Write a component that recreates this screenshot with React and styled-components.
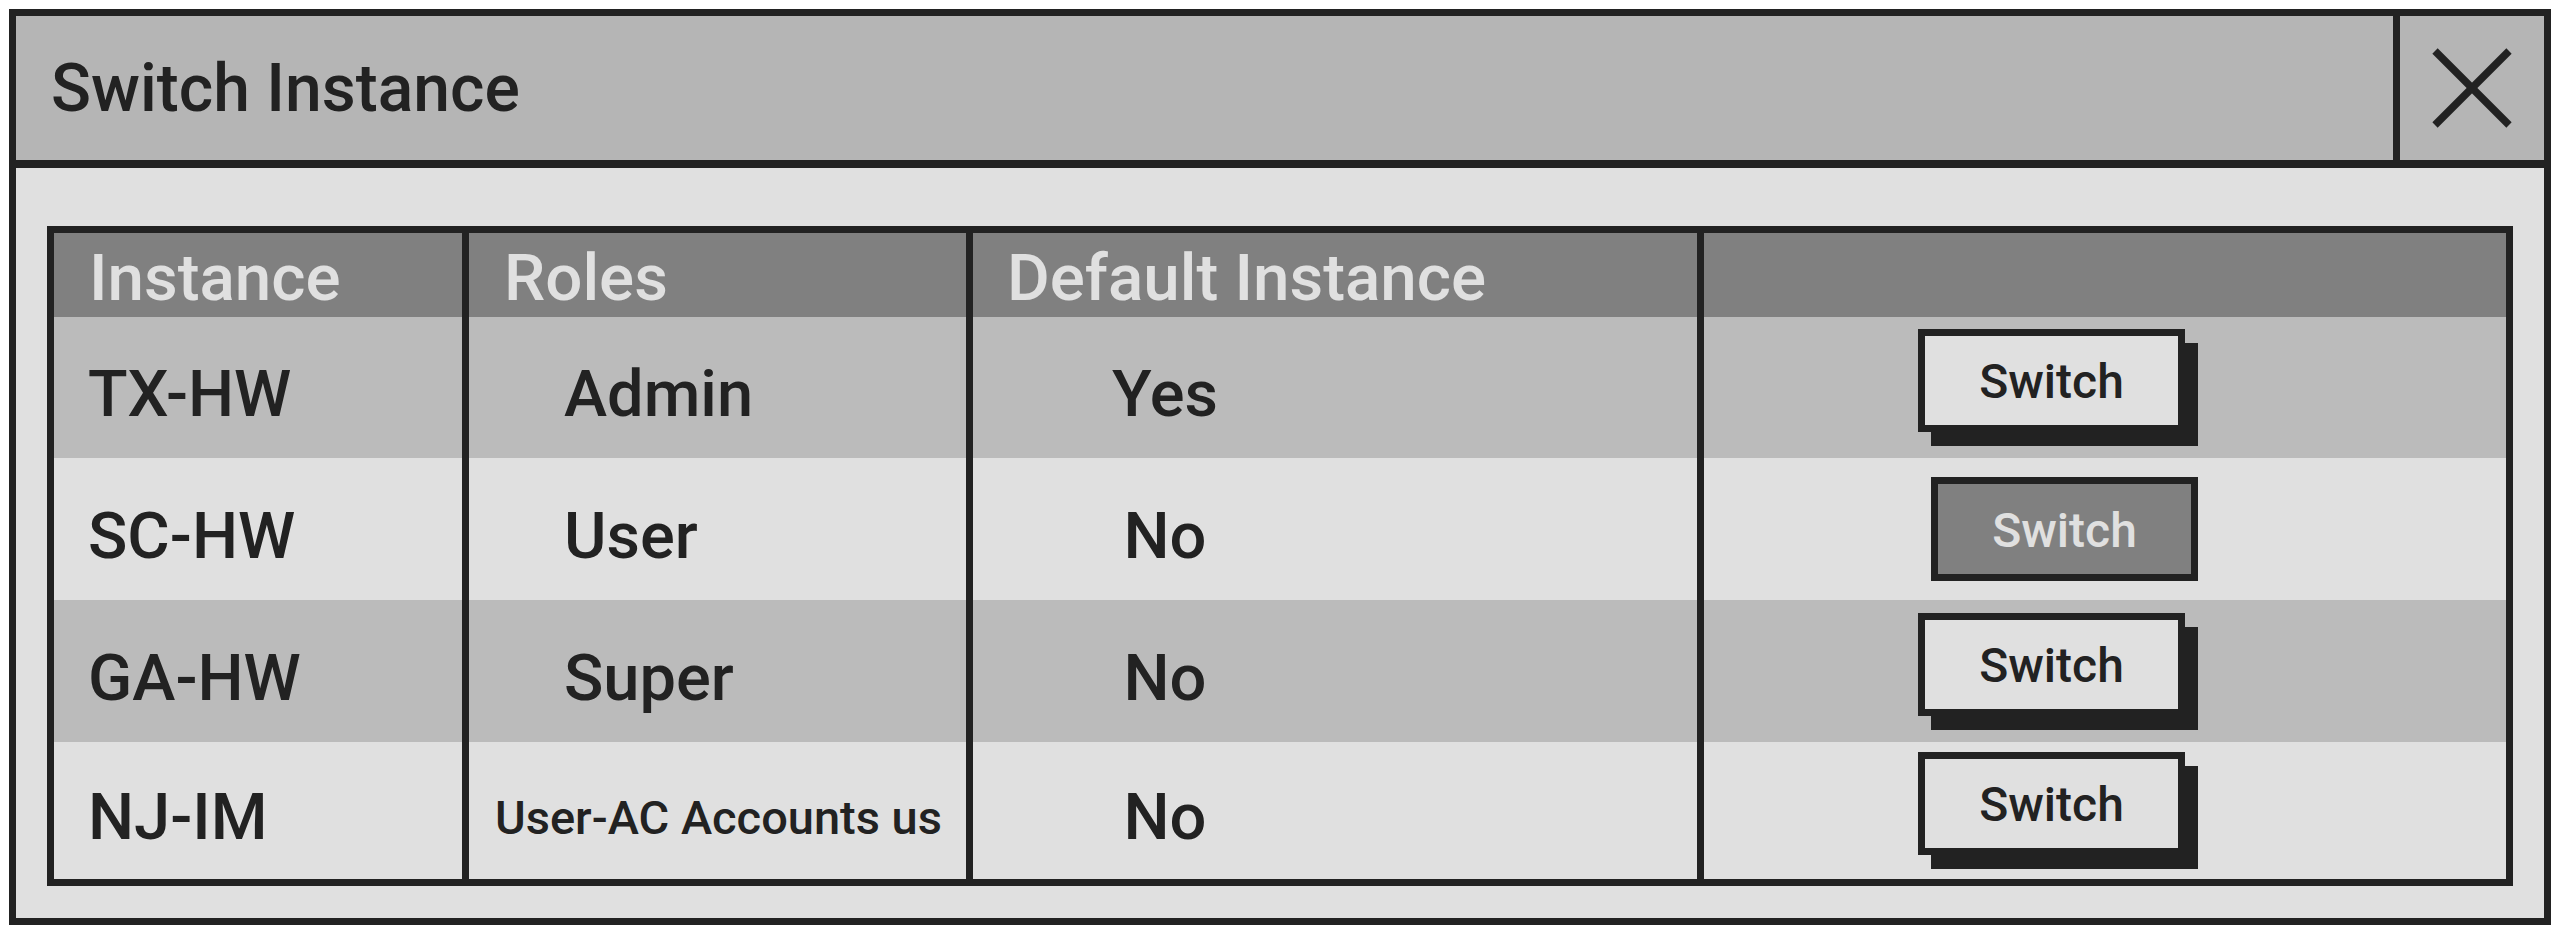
import React from "react";
import styled, { createGlobalStyle } from "styled-components";

const Global = createGlobalStyle`
  html, body { margin: 0; padding: 0; background: #ffffff; }
  body { font-family: Roboto, "Liberation Sans", sans-serif; }
  * { box-sizing: border-box; }
`;

const Page = styled.div`
  width: 2560px;
  height: 934px;
  padding: 9px;
`;

const Dialog = styled.div`
  width: 100%;
  height: 100%;
  border: 7px solid #222222;
  background: #e0e0e0;
  display: flex;
  flex-direction: column;
`;

const TitleBar = styled.div`
  height: 152px;
  flex: none;
  display: flex;
  align-items: stretch;
  background: #b5b5b5;
  border-bottom: 8px solid #222222;
`;

const Title = styled.h1`
  flex: 1;
  margin: 0;
  padding-left: 35px;
  display: flex;
  align-items: center;
  font-size: 66px;
  font-weight: 500;
  color: #222222;
  line-height: normal;
`;

const CloseButton = styled.button`
  width: 151px;
  flex: none;
  border: none;
  border-left: 7px solid #222222;
  background: #b5b5b5;
  padding: 0;
  display: flex;
  align-items: center;
  justify-content: center;
  cursor: pointer;
`;

const Body = styled.div`
  flex: 1;
  padding: 58px 31px 31px 31px;
`;

const Table = styled.div`
  border: 7px solid #222222;
  display: flex;
  flex-direction: column;
`;

const Row = styled.div`
  display: grid;
  grid-template-columns: 408px 504px 731px 1fr;
  height: ${(p) => p.$h}px;
  background: ${(p) => p.$bg};
`;

const Cell = styled.div`
  display: flex;
  align-items: center;
  padding-left: ${(p) => p.$pl ?? 34}px;
  padding-top: ${(p) => (p.$head ? 5 : 13)}px;
  border-left: ${(p) => (p.$first ? "none" : "7px solid #222222")};
  font-size: ${(p) => p.$fs ?? 65}px;
  font-weight: 500;
  line-height: normal;
  color: ${(p) => (p.$head ? "#e0e0e0" : "#222222")};
  white-space: nowrap;
  overflow: hidden;
`;

const ActionCell = styled.div`
  display: flex;
  align-items: center;
  padding-left: 214px;
  border-left: 7px solid #222222;
`;

const DefaultValue = styled.span`
  display: inline-block;
  width: 384px;
  text-align: center;
`;

const SwitchButton = styled.button`
  width: 267px;
  height: ${(p) => (p.disabled ? 104 : 103)}px;
  border: 7px solid #222222;
  background: ${(p) => (p.disabled ? "#808080" : "#e0e0e0")};
  color: ${(p) => (p.disabled ? "#e0e0e0" : "#222222")};
  font-family: Roboto, "Liberation Sans", sans-serif;
  font-size: 48px;
  font-weight: 500;
  line-height: normal;
  padding: 2px 0 0 0;
  display: flex;
  align-items: center;
  justify-content: center;
  box-shadow: ${(p) => (p.disabled ? "none" : "13px 14px 0 #222222")};
  margin-left: ${(p) => (p.disabled ? 13 : 0)}px;
  margin-bottom: ${(p) => (p.disabled ? 0 : 14)}px;
  cursor: ${(p) => (p.disabled ? "default" : "pointer")};
`;

const CloseIcon = () => (
  <svg width="144" height="144" viewBox="0 0 144 144">
    <line x1="35" y1="35" x2="109" y2="109" stroke="#222222" strokeWidth="7.5" />
    <line x1="109" y1="35" x2="35" y2="109" stroke="#222222" strokeWidth="7.5" />
  </svg>
);

const rows = [
  { inst: "TX-HW", role: "Admin", def: "Yes", bg: "#bbbbbb", h: 141, current: false },
  { inst: "SC-HW", role: "User", def: "No", bg: "#e0e0e0", h: 142, current: true },
  { inst: "GA-HW", role: "Super", def: "No", bg: "#bbbbbb", h: 142, current: false },
  { inst: "NJ-IM", role: "User-AC Accounts us", def: "No", bg: "#e0e0e0", h: 137, current: false, small: true },
];

export default function App() {
  return (
    <Page>
      <Global />
      <Dialog>
        <TitleBar>
          <Title>Switch Instance</Title>
          <CloseButton aria-label="Close">
            <CloseIcon />
          </CloseButton>
        </TitleBar>
        <Body>
          <Table>
            <Row $h={84} $bg="#808080">
              <Cell $head $first $pl={35} $fs={65.5}>Instance</Cell>
              <Cell $head $pl={35} $fs={65.5}>Roles</Cell>
              <Cell $head $pl={34} $fs={65.5}>Default Instance</Cell>
              <Cell $head />
            </Row>
            {rows.map((r) => (
              <Row key={r.inst} $h={r.h} $bg={r.bg}>
                <Cell $first>{r.inst}</Cell>
                <Cell $pl={r.small ? 26 : 95} $fs={r.small ? 47 : 65}>
                  {r.role}
                </Cell>
                <Cell $pl={0}>
                  <DefaultValue>{r.def}</DefaultValue>
                </Cell>
                <ActionCell>
                  <SwitchButton disabled={r.current}>Switch</SwitchButton>
                </ActionCell>
              </Row>
            ))}
          </Table>
        </Body>
      </Dialog>
    </Page>
  );
}
